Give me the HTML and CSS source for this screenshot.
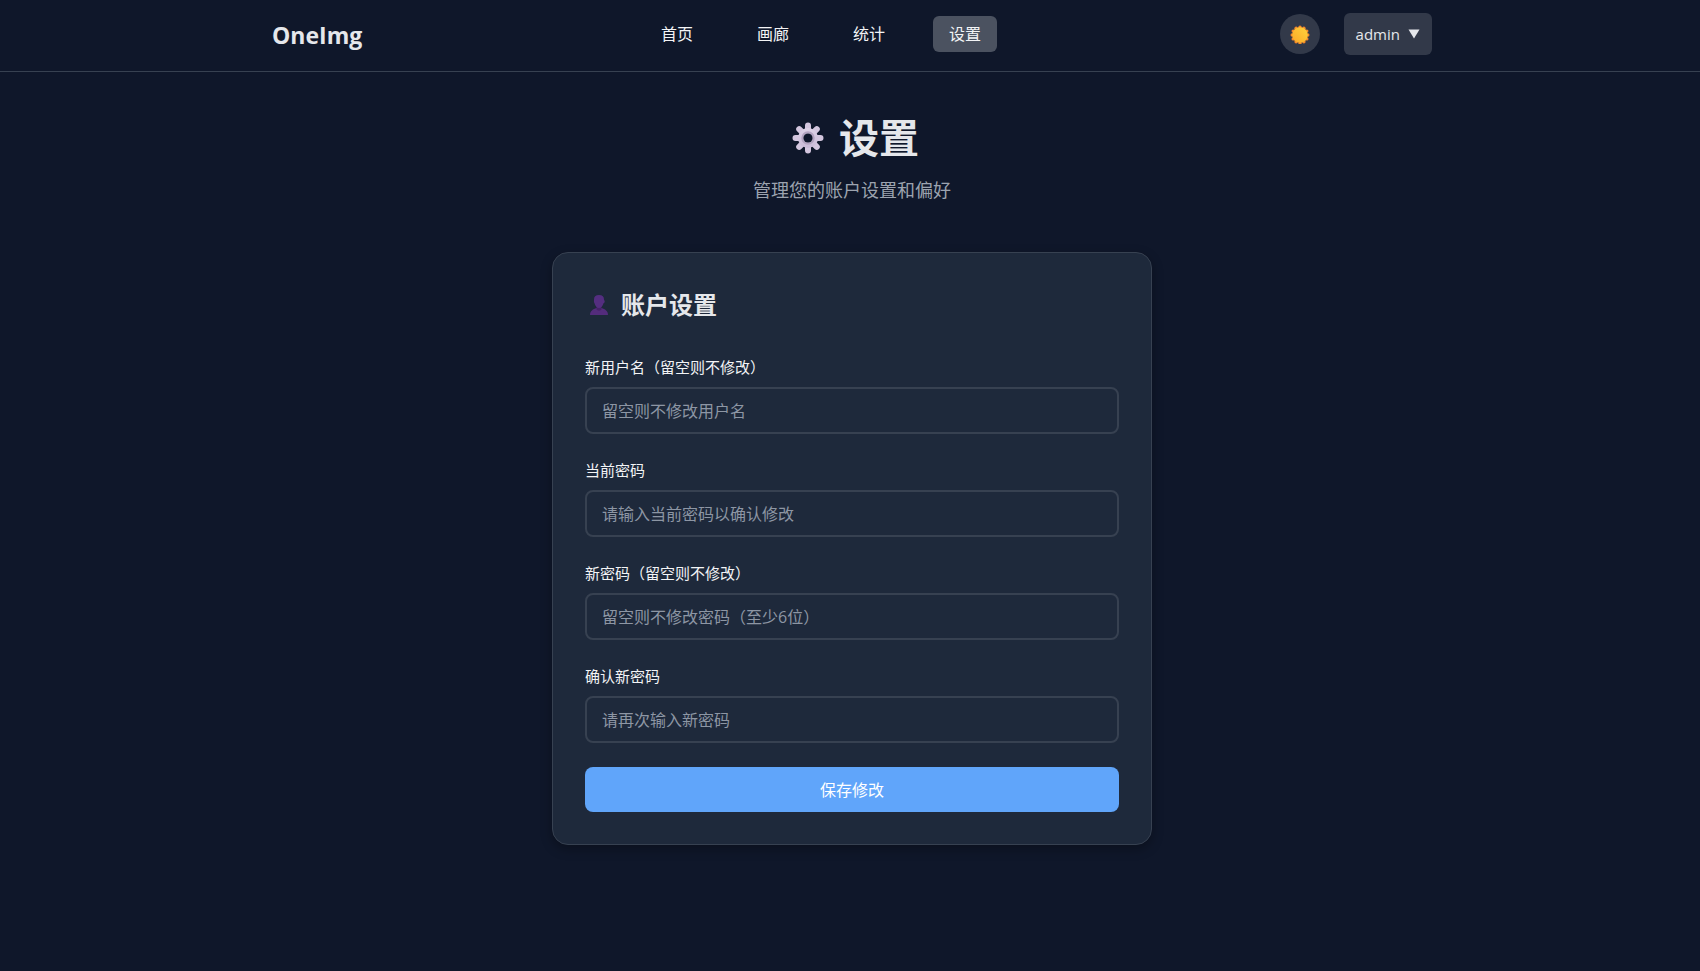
FILE: index.html
```
<!DOCTYPE html>
<html lang="zh-CN">
  <head>
    <meta charset="UTF-8" />
    <title>设置 - OneImg</title>
    <meta name="viewport" content="width=device-width, initial-scale=1.0" />
    <link rel="stylesheet" href="styles.css">
  </head>
  <body>
    <header class="navbar">
      <div class="nav-container">
        <a class="nav-brand" href="#">OneImg</a>
        <nav class="nav-menu">
          <a class="nav-link" href="#">首页</a>
          <a class="nav-link" href="#">画廊</a>
          <a class="nav-link" href="#">统计</a>
          <a class="nav-link active" href="#">设置</a>
        </nav>
        <div class="nav-actions">
          <button class="theme-toggle" type="button" aria-label="切换主题">
            <svg viewBox="0 -1 20 20" width="20" height="20">
              <defs>
                <linearGradient id="sun" x1="1" y1="0" x2="0" y2="1">
                  <stop offset="0" stop-color="#ffd23c" />
                  <stop offset="1" stop-color="#fba928" />
                </linearGradient>
              </defs>
              <g fill="#f58a2a">
                <circle cx="10" cy="2.2" r="1.7" />
                <circle cx="13.9" cy="3.2" r="1.7" />
                <circle cx="16.8" cy="6.1" r="1.7" />
                <circle cx="17.8" cy="10" r="1.7" />
                <circle cx="16.8" cy="13.9" r="1.7" />
                <circle cx="13.9" cy="16.8" r="1.7" />
                <circle cx="10" cy="17.8" r="1.7" />
                <circle cx="6.1" cy="16.8" r="1.7" />
                <circle cx="3.2" cy="13.9" r="1.7" />
                <circle cx="2.2" cy="10" r="1.7" />
                <circle cx="3.2" cy="6.1" r="1.7" />
                <circle cx="6.1" cy="3.2" r="1.7" />
              </g>
              <circle cx="10" cy="10" r="7.8" fill="url(#sun)" />
            </svg>
          </button>
          <button class="user-button" type="button">
            <span>admin</span>
            <svg viewBox="0 0 12 10" width="12" height="10">
              <path d="M0.5 0.5h11L6 9.5z" fill="currentColor" />
            </svg>
          </button>
        </div>
      </div>
    </header>

    <main class="page">
      <div class="page-header">
        <h1>
          <svg class="gear" viewBox="-7 0 40 32" width="40" height="32">
            <defs>
              <linearGradient id="gear" x1="0" y1="0" x2="0" y2="1">
                <stop offset="0" stop-color="#ddd2e6" />
                <stop offset="1" stop-color="#c9b9d6" />
              </linearGradient>
              <mask id="hole" maskUnits="userSpaceOnUse" x="0" y="0" width="32" height="32">
                <rect width="32" height="32" fill="#fff" />
                <circle cx="16" cy="16" r="4.6" fill="#000" />
              </mask>
            </defs>
            <g mask="url(#hole)">
              <g stroke="#d3c6de" stroke-width="6" stroke-linecap="round">
                <path d="M16 3.500v25M3.500 16h25M7.200 7.200l17.600 17.600M24.800 7.200L7.200 24.800" />
              </g>
              <circle cx="16" cy="16" r="10" fill="url(#gear)" />
              <circle cx="16" cy="16" r="5.700" fill="none" stroke="#b3a4c0" stroke-width="2" />
            </g>
          </svg>
          设置
        </h1>
        <p>管理您的账户设置和偏好</p>
      </div>

      <section class="card">
        <h2>
          <svg class="person" viewBox="-2 0 26 24" width="26" height="24">
            <path d="M3 22c0-4 3-6 6.500-7h5c3.500 1 6.500 3 6.500 7z" fill="#542c7c" />
            <path d="M9.500 13h5v3.500c-1 1.500-4 1.500-5 0z" fill="#452268" />
            <path d="M12 2c3.500 0 5 1.700 5 4.500 0 .8.800.9.700 2-.1 1-.6 1.500-1.200 1.700-.6 2.600-2.200 4.800-4.500 4.800s-3.900-2.200-4.500-4.800C6.800 9.500 7 8 7 6.500 7 3.700 8.500 2 12 2z" fill="#542e80" />
          </svg>
          账户设置
        </h2>
        <form>
          <div class="form-group">
            <label for="username">新用户名（留空则不修改）</label>
            <input type="text" id="username" placeholder="留空则不修改用户名" />
          </div>
          <div class="form-group">
            <label for="currentPassword">当前密码</label>
            <input type="password" id="currentPassword" placeholder="请输入当前密码以确认修改" />
          </div>
          <div class="form-group">
            <label for="newPassword">新密码（留空则不修改）</label>
            <input type="password" id="newPassword" placeholder="留空则不修改密码（至少6位）" />
          </div>
          <div class="form-group">
            <label for="confirmPassword">确认新密码</label>
            <input type="password" id="confirmPassword" placeholder="请再次输入新密码" />
          </div>
          <button class="submit-button" type="submit">保存修改</button>
        </form>
      </section>
    </main>
  </body>
</html>
```
FILE: styles.css
```
* {
  box-sizing: border-box;
  margin: 0;
  padding: 0;
}
body {
  background: #0f172a;
  color: #e5e7eb;
  font-family: "Open Sans", "Noto Sans CJK SC", sans-serif;
  font-size: 16px;
  line-height: 24px;
  min-height: 100vh;
}
button,
input {
  font: inherit;
}
.navbar {
  border-bottom: 1px solid #374151;
  padding: 13px 0 16px 4px;
}
.nav-container {
  max-width: 1200px;
  margin: 0 auto;
  padding: 0 20px;
  display: flex;
  align-items: center;
  justify-content: space-between;
}
.nav-brand {
  color: #e5e7eb;
  font-size: 23px;
  font-weight: 700;
  padding-top: 2px;
  text-decoration: none;
}
.nav-menu {
  display: flex;
  gap: 32px;
}
.nav-link {
  color: #f3f4f6;
  text-decoration: none;
  padding: 6px 16px;
  border-radius: 6px;
}
.nav-link.active {
  background: #4b5260;
}
.nav-actions {
  display: flex;
  align-items: center;
  gap: 24px;
}
.theme-toggle {
  display: flex;
  align-items: center;
  justify-content: center;
  width: 40px;
  height: 40px;
  border: none;
  border-radius: 50%;
  background: #323949;
  cursor: pointer;
}
.user-button {
  display: flex;
  align-items: center;
  gap: 8px;
  padding: 9px 12px;
  border: none;
  border-radius: 6px;
  background: #323949;
  color: #e5e7eb;
  font-size: 15px;
  cursor: pointer;
}
.page {
  padding: 36px 0 40px 4px;
}
.page-header {
  text-align: center;
  margin-bottom: 48px;
}
h1 {
  display: flex;
  align-items: center;
  justify-content: center;
  gap: 14px;
  font-size: 40px;
  font-weight: 700;
  line-height: 60px;
  margin-bottom: 8px;
}
.page-header p {
  color: #9ca3af;
  font-size: 18px;
  line-height: 28px;
}
.card {
  max-width: 600px;
  margin: 0 auto;
  padding: 32px;
  background: #1e293b;
  border: 1px solid #374151;
  border-radius: 16px;
  box-shadow: 0 4px 12px rgba(0, 0, 0, 0.3);
}
h2 {
  display: flex;
  align-items: center;
  gap: 10px;
  font-size: 24px;
  font-weight: 700;
  line-height: 40px;
  margin-bottom: 30px;
}
.form-group {
  margin-bottom: 24px;
}
label {
  display: block;
  color: #f3f4f6;
  font-size: 15px;
  margin-bottom: 8px;
}
input {
  display: block;
  width: 100%;
  height: 47px;
  padding: 0 15px;
  background: transparent;
  color: #e5e7eb;
  border: 2px solid #374151;
  border-radius: 8px;
}
input::placeholder {
  color: #8d96a4;
}
input:focus {
  outline: none;
  border-color: #60a5fa;
}
.submit-button {
  display: block;
  width: 100%;
  height: 45px;
  border: none;
  border-radius: 8px;
  background: #60a5fa;
  color: #fff;
  cursor: pointer;
}
```
